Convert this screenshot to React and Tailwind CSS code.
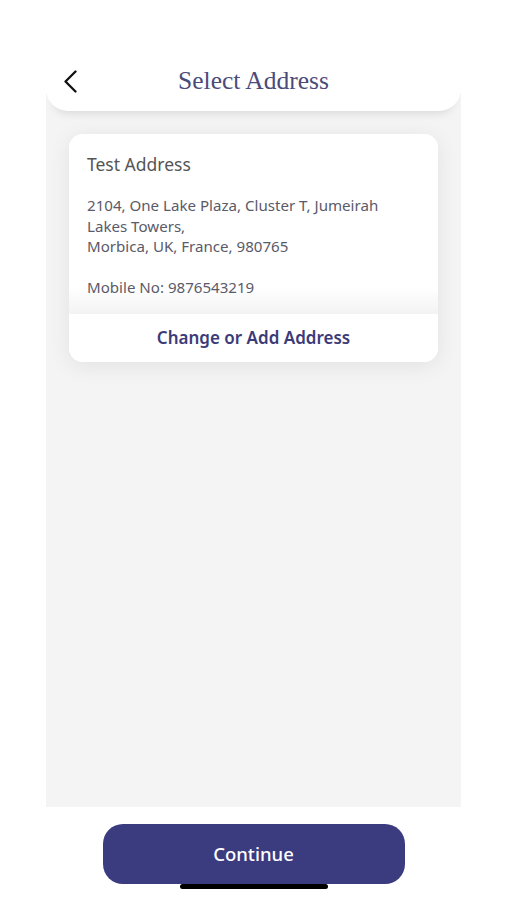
const sans = "font-['Noto_Sans','Open_Sans',sans-serif]";

export default function App() {
  return (
    <div className={`relative min-h-[900px] w-full bg-white ${sans}`}>
      {/* Screen panel */}
      <div className="ml-[46px] flex h-[807px] w-[415px] flex-col bg-[linear-gradient(to_bottom,#ffffff_93px,#f4f4f4_93px)]">
        {/* Header */}
        <div className="relative z-10 h-[111px] rounded-b-[22px] bg-white pt-[62px] shadow-[0_10px_10px_-8px_rgba(0,0,0,0.12)]">
          <div className="relative flex h-[38px] items-center justify-center">
            <svg
              className="absolute left-[17px] top-[8px]"
              width="15"
              height="23"
              viewBox="0 0 15 23"
              fill="none"
              stroke="#111"
              strokeWidth="2.3"
              strokeLinecap="round"
              strokeLinejoin="round"
            >
              <polyline points="12.5,1.5 2.5,11.5 12.5,21.5" />
            </svg>
            <h1 className="font-['Liberation_Serif',serif] text-[25.5px] text-[#4b4b7b]">
              Select Address
            </h1>
          </div>
        </div>

        {/* Address card */}
        <div className="mx-[23px] mt-[23px] overflow-hidden rounded-[14px] bg-white shadow-[0_4px_22px_rgba(0,0,0,0.08)]">
          <div className="bg-[linear-gradient(to_bottom,#ffffff_85%,#f3f3f3)] px-[18px] pb-[17px] pt-[20px]">
            <p className="text-[17.5px] leading-[20px] text-[#555555]">Test Address</p>
            <p className="mt-[21px] text-[15.1px] leading-[20.5px] text-[#5a5a68]">
              2104, One Lake Plaza, Cluster T, Jumeirah
              <br />
              Lakes Towers,
              <br />
              Morbica, UK, France, 980765
            </p>
            <p className="mt-[20px] text-[15.1px] leading-[20px] text-[#5a5a68]">
              Mobile No: 9876543219
            </p>
          </div>
          <div className="flex h-[48px] items-center justify-center bg-white">
            <span className="text-[17px] font-semibold text-[#3b3b78]">
              Change or Add Address
            </span>
          </div>
        </div>
      </div>

      {/* Bottom action */}
      <div className="mt-[17px] flex justify-center">
        <button className="h-[60px] w-[302px] rounded-[20px] bg-[#3b3b80] text-[18.5px] font-medium text-white">
          Continue
        </button>
      </div>

      {/* Home indicator */}
      <div className="absolute left-[180px] top-[884px] h-[5px] w-[148px] rounded-full bg-black" />
    </div>
  );
}
